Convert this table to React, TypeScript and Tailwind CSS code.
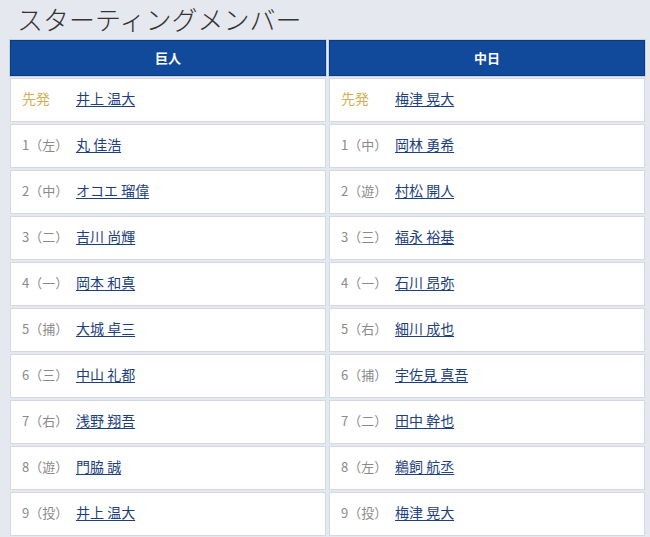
const giants = [
  { pos: '先発', name: '井上 温大', starter: true },
  { pos: '1（左）', name: '丸 佳浩' },
  { pos: '2（中）', name: 'オコエ 瑠偉' },
  { pos: '3（二）', name: '吉川 尚輝' },
  { pos: '4（一）', name: '岡本 和真' },
  { pos: '5（捕）', name: '大城 卓三' },
  { pos: '6（三）', name: '中山 礼都' },
  { pos: '7（右）', name: '浅野 翔吾' },
  { pos: '8（遊）', name: '門脇 誠' },
  { pos: '9（投）', name: '井上 温大' },
]

const dragons = [
  { pos: '先発', name: '梅津 晃大', starter: true },
  { pos: '1（中）', name: '岡林 勇希' },
  { pos: '2（遊）', name: '村松 開人' },
  { pos: '3（三）', name: '福永 裕基' },
  { pos: '4（一）', name: '石川 昂弥' },
  { pos: '5（右）', name: '細川 成也' },
  { pos: '6（捕）', name: '宇佐見 真吾' },
  { pos: '7（二）', name: '田中 幹也' },
  { pos: '8（左）', name: '鵜飼 航丞' },
  { pos: '9（投）', name: '梅津 晃大' },
]

type Player = { pos: string; name: string; starter?: boolean }

const TeamColumn = ({ team, players }: { team: string; players: Player[] }) => (
  <div className="flex flex-col gap-[2px]">
    {/* Team header */}
    <div className="h-[36px] flex items-center justify-center bg-[#114a9b] border border-[#0b3b80] outline outline-1 outline-[#c9d2e3] text-white text-[13px] font-bold">
      {team}
    </div>
    {players.map((p, i) => (
      <div
        key={i}
        className="h-[44px] flex items-center bg-white border border-[#d3d8e2] px-[11px] pb-[3px]"
      >
        <span
          className={
            p.starter
              ? 'w-[54px] shrink-0 text-[14px] text-[#d6ad55]'
              : 'w-[54px] shrink-0 text-[13px] text-[#8a8a8a]'
          }
        >
          {p.pos}
        </span>
        <a href="#" className="text-[14px] text-[#1d3f7c] underline underline-offset-2">
          {p.name}
        </a>
      </div>
    ))}
  </div>
)

export default function App() {
  return (
    <div
      className="w-[650px] h-[537px] overflow-hidden bg-[#e5e8ef]"
      style={{ fontFamily: '"Noto Sans CJK JP", "Noto Sans", sans-serif' }}
    >
      <h1 className="h-[40px] pl-[17px] text-[26px] leading-[38px] text-[#333333] font-light">
        スターティングメンバー
      </h1>
      <div className="grid grid-cols-2 gap-[3px] pl-[10px] pr-[5px]">
        <TeamColumn team="巨人" players={giants} />
        <TeamColumn team="中日" players={dragons} />
      </div>
    </div>
  )
}
